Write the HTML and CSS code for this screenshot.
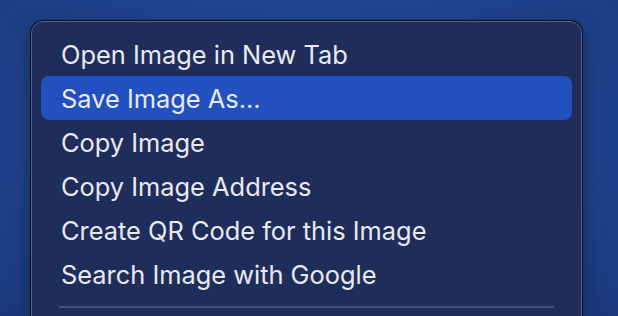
FILE: index.html
```html
<!DOCTYPE html>
<html lang="en">
<head>
  <meta charset="UTF-8">
  <title>Context Menu</title>
  <link rel="stylesheet" href="styles.css">
</head>
<body>
  <div class="menu">
    <div class="item">Open Image in New Tab</div>
    <div class="item active">Save Image As...</div>
    <div class="item">Copy Image</div>
    <div class="item">Copy Image Address</div>
    <div class="item">Create QR Code for this Image</div>
    <div class="item">Search Image with Google</div>
    <div class="separator"></div>
  </div>
</body>
</html>
```

FILE: styles.css
```css
* {
  margin: 0;
  padding: 0;
  box-sizing: border-box;
}

html, body {
  height: 100%;
  overflow: hidden;
}

body {
  background: radial-gradient(ellipse at 50% 40%, #2250a0 0%, #1f4590 55%, #1b3a7c 100%);
  font-family: Inter, "Noto Sans", sans-serif;
  padding: 21px 0 0 31px;
}

.menu {
  width: 551px;
  background: #1f2d5b;
  border: 1px solid #56618c;
  border-radius: 12px;
  box-shadow: 0 0 0 1px #0a0e1c, 0 6px 24px rgba(0, 0, 0, 0.35);
  padding: 10px 9px 20px;
  display: flex;
  flex-direction: column;
}

.item {
  height: 44px;
  display: flex;
  align-items: center;
  padding-left: 20px;
  color: #e9eaf0;
  font-size: 25.4px;
  border-radius: 8px;
}

.item.active {
  background: #2150bf;
}

.separator {
  height: 2px;
  background: #44507a;
  margin: 10px 18px 0;
}
```
